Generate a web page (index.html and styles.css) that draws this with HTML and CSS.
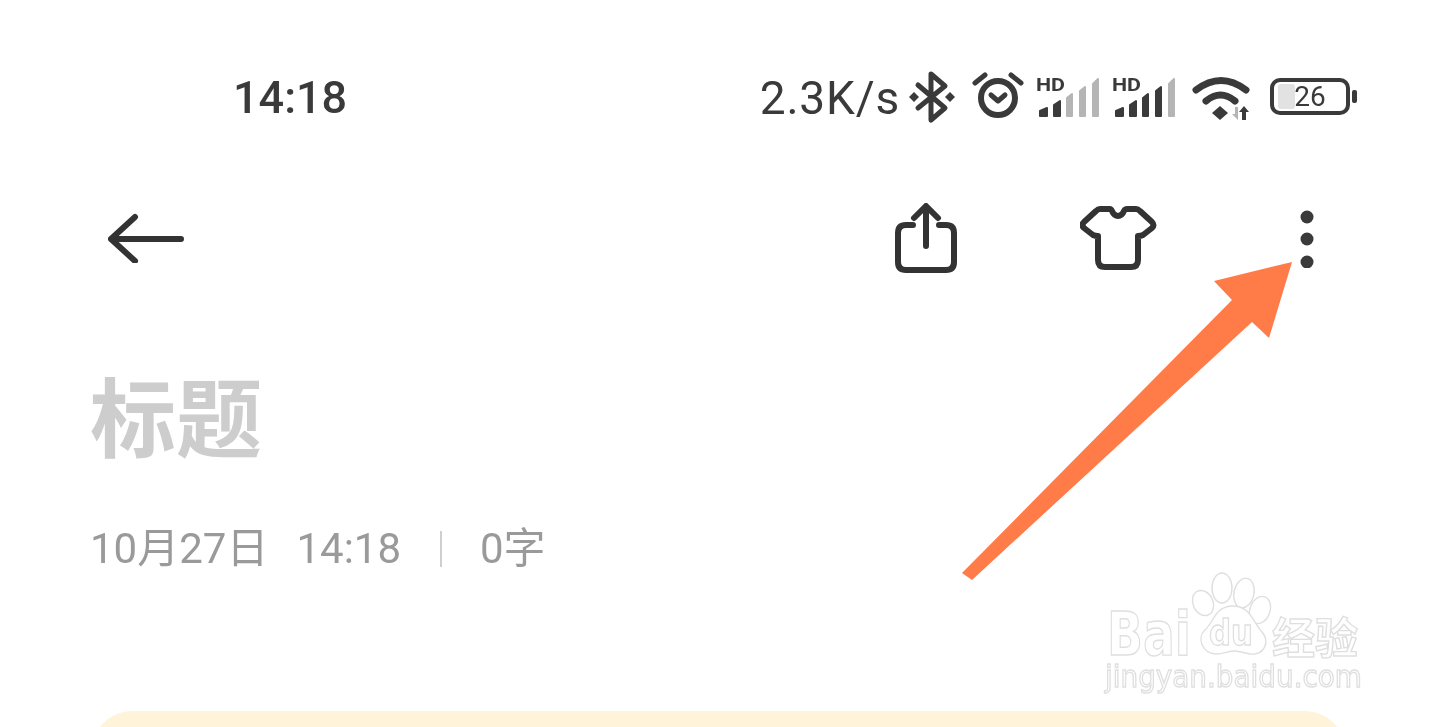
FILE: index.html
```html
<!DOCTYPE html>
<html lang="zh">
<head>
<meta charset="utf-8">
<title>笔记</title>
<link rel="stylesheet" href="styles.css">
</head>
<body>
<main class="screen">
  <header class="status">
    <span class="clock">14:18</span>
    <div class="status-right">
      <span class="speed">2.3K/s</span>
      <svg class="i-bt" width="45" height="56" viewBox="0 0 45 56"><path class="st5" d="M8 15L35 38L21 50V4L35 16L8 38"/><path class="dot" d="M4 22L9 27L4 32L-1 27Z"/><path class="dot" d="M40 22L45 27L40 32L35 27Z"/></svg>
      <svg class="i-alarm" width="52" height="56" viewBox="0 0 52 56"><circle class="st55" cx="26" cy="28" r="17"/><path class="st5" d="M19 25L26 31L33 25"/><path class="st5" d="M3 13L13 5M39 5L49 13"/></svg>
      <svg class="i-sig" width="64" height="44" viewBox="0 0 64 44">
        <text class="hd" x="0" y="15" textLength="29" lengthAdjust="spacingAndGlyphs">HD</text>
        <path class="on" d="M4 40V35L11 32V40Z"/><path class="on" d="M18 40V29L24 25V40Z"/>
        <path class="off" d="M31 40V22L36 18V40Z"/><path class="off" d="M44 40V15L49 11V40Z"/><path class="off" d="M57 40V8L62 3V40Z"/>
      </svg>
      <svg class="i-sig" width="64" height="44" viewBox="0 0 64 44">
        <text class="hd" x="0" y="15" textLength="29" lengthAdjust="spacingAndGlyphs">HD</text>
        <path class="on" d="M4 40V35L11 32V40Z"/><path class="on" d="M18 40V29L24 25V40Z"/>
        <path class="on" d="M31 40V22L36 18V40Z"/><path class="on" d="M44 40V15L49 11V40Z"/><path class="off" d="M57 40V8L62 3V40Z"/>
      </svg>
      <svg class="i-wifi" width="60" height="48" viewBox="0 0 60 48"><path class="st7" d="M4 16Q29 -3 54 16M14 27Q28.500 15 43 27"/><path class="dot" d="M20 39L28 32L36 39L28 46Z"/><path class="off-flat" d="M46 33V46L40 40H43V33Z"/><path class="dot" d="M47 38L52 32L57 38H54V46H50V38Z"/></svg>
      <div class="battery"><span class="batt-fill"></span><span class="batt-num">26</span></div>
      <span class="batt-nub"></span>
    </div>
  </header>

  <nav class="toolbar">
    <svg class="back" width="76" height="50" viewBox="0 0 76 50"><path class="st6" d="M3 26H73M27 4L3 26L27 48"/></svg>
    <div class="tools">
      <svg width="62" height="70" viewBox="0 0 62 70"><path class="st6" d="M18 22H11Q3 22 3 30V59Q3 67 11 67H51Q59 67 59 59V30Q59 22 51 22H44M31 43V4M19 15L31 3L43 15"/></svg>
      <svg class="shirt" width="78" height="66" viewBox="0 0 78 66"><path class="st6" d="M30 4H20Q18 4 16 6L4 17Q1 20 4 23L13 30Q15 31 18 31V55Q18 62 25 62H51Q58 62 58 55V31Q61 31 63 30L72 23Q75 20 72 17L60 6Q58 4 56 4H47Q45 4 44 6Q42 11 38 11Q34 11 32 6Q31 4 30 4Z"/></svg>
      <svg class="more" width="14" height="60" viewBox="0 0 14 60"><circle class="dot" cx="7" cy="9" r="6.500"/><circle class="dot" cx="7" cy="31" r="6.500"/><circle class="dot" cx="7" cy="54" r="6.500"/></svg>
    </div>
  </nav>

  <h1 class="title">标题</h1>
  <p class="meta"><span>10月27日</span><span class="t">14:18</span><i class="sep"></i><span>0字</span></p>
  <section class="card"></section>

  <svg class="pointer" width="345" height="335" viewBox="0 0 345 335"><polygon points="341,10 263,29 281,48 11,321 21,328 301,70 318,86"/></svg>

  <svg class="mark" width="290" height="167" viewBox="0 0 290 167">
    <ellipse cx="113" cy="43" rx="10" ry="13" transform="rotate(-25 113 43)"/><ellipse cx="132" cy="28" rx="10" ry="15"/><ellipse cx="154" cy="33" rx="10" ry="15" transform="rotate(12 154 33)"/><ellipse cx="170" cy="50" rx="10" ry="14" transform="rotate(20 170 50)"/>
    <path d="M143 46C125 46 124 62 115 70C106 78 113 94 126 94C134 94 138 91 145 91C152 91 157 95 165 94C176 92 179 80 172 72C163 62 160 46 143 46Z"/>
    <text class="mk-bai" x="17" y="95" textLength="84" lengthAdjust="spacingAndGlyphs">Bai</text>
    <text class="mk-du" x="119" y="85" textLength="44" lengthAdjust="spacingAndGlyphs">du</text>
    <text class="mk-cn" x="182" y="94" textLength="86" lengthAdjust="spacingAndGlyphs">经验</text>
    <text class="mk-url" x="15" y="127" textLength="257" lengthAdjust="spacingAndGlyphs">jingyan.baidu.com</text>
  </svg>
</main>
</body>
</html>
```

FILE: styles.css
```css
* { box-sizing: border-box; }
html, body { margin: 0; height: 100%; background: #fff; }
body { overflow: hidden; font-family: Roboto, "Noto Sans CJK SC", sans-serif; }
.screen { position: relative; width: 1440px; height: 727px; overflow: hidden; will-change: opacity; }

.status { display: flex; align-items: center; justify-content: space-between; height: 60px; margin-top: 68px; padding: 0 83px 0 233px; color: #3a3a3a; }
.clock { font-size: 45px; font-weight: 500; line-height: 60px; }
.status-right { display: flex; align-items: center; }
.speed { font-size: 46px; font-weight: 450; line-height: 60px; letter-spacing: .8px; margin-right: 10px; }
.i-bt { overflow: visible; }
.i-alarm { margin-left: 17px; }
.i-sig { margin-left: 12px; }
.i-wifi { margin-left: 16px; }
.battery { position: relative; display: flex; align-items: center; justify-content: center; width: 80px; height: 37px; margin: 0 0 3px 18px; border: 4px solid #3a3a3a; border-radius: 10px; }
.batt-fill { position: absolute; left: 4px; top: 2px; bottom: 2px; width: 17px; background: #e2e2e2; border-radius: 3px; }
.batt-num { position: relative; font-size: 28px; line-height: 29px; }
.batt-nub { width: 5px; height: 13px; margin: 0 0 4px 2px; background: #3a3a3a; border-radius: 2px; }

svg path.st5 { fill: none; stroke: #3a3a3a; stroke-width: 5; stroke-linecap: round; stroke-linejoin: round; }
svg circle.st55 { fill: none; stroke: #3a3a3a; stroke-width: 6; }
svg path.st6 { fill: none; stroke: #333; stroke-width: 6; stroke-linecap: round; stroke-linejoin: round; }
svg path.st7 { fill: none; stroke: #3a3a3a; stroke-width: 7; stroke-linecap: round; stroke-linejoin: round; }
.dot { fill: #3a3a3a; }
.on { fill: #3a3a3a; stroke: #3a3a3a; stroke-width: 2; stroke-linejoin: round; }
.off { fill: #b5b5b5; stroke: #b5b5b5; stroke-width: 2; stroke-linejoin: round; }
.off-flat { fill: #b5b5b5; }
.hd { font-family: Roboto, sans-serif; font-size: 19px; font-weight: 700; fill: #3a3a3a; }

.toolbar { display: flex; align-items: center; justify-content: space-between; height: 70px; margin-top: 75px; padding: 0 126px 0 108px; }
.tools { display: flex; align-items: center; }
.shirt { margin-left: 123px; }
.more { margin-left: 142px; }

.title { margin: 91px 0 0 90px; font: 700 86px/100px "Noto Sans CJK SC", sans-serif; color: #cdcdcd; }
.meta { display: flex; align-items: center; margin: 60px 0 0 90px; font: 400 42px/50px Roboto, "Noto Sans CJK SC", sans-serif; color: #9a9a9a; }
.t { margin-left: 28px; }
.sep { width: 2px; height: 36px; margin: 0 38px 0 39px; background: #cfcfcf; }
.card { height: 120px; margin: 137px 95px 0 92px; background: #fff4d9; border-radius: 40px 40px 0 0; }

.pointer { position: absolute; left: 951px; top: 252px; }
.pointer polygon { fill: #ff7b47; }

.mark { position: absolute; left: 1090px; top: 560px; fill: #fff; stroke: #dfdfdf; stroke-width: 1.4; }
.mk-bai { font: 700 60px "DejaVu Sans", sans-serif; }
.mk-du { font: 700 36px "DejaVu Sans", sans-serif; }
.mk-cn { font: 700 43px "Noto Sans CJK SC", sans-serif; }
.mk-url { font: 400 31px "DejaVu Sans", sans-serif; }
```
